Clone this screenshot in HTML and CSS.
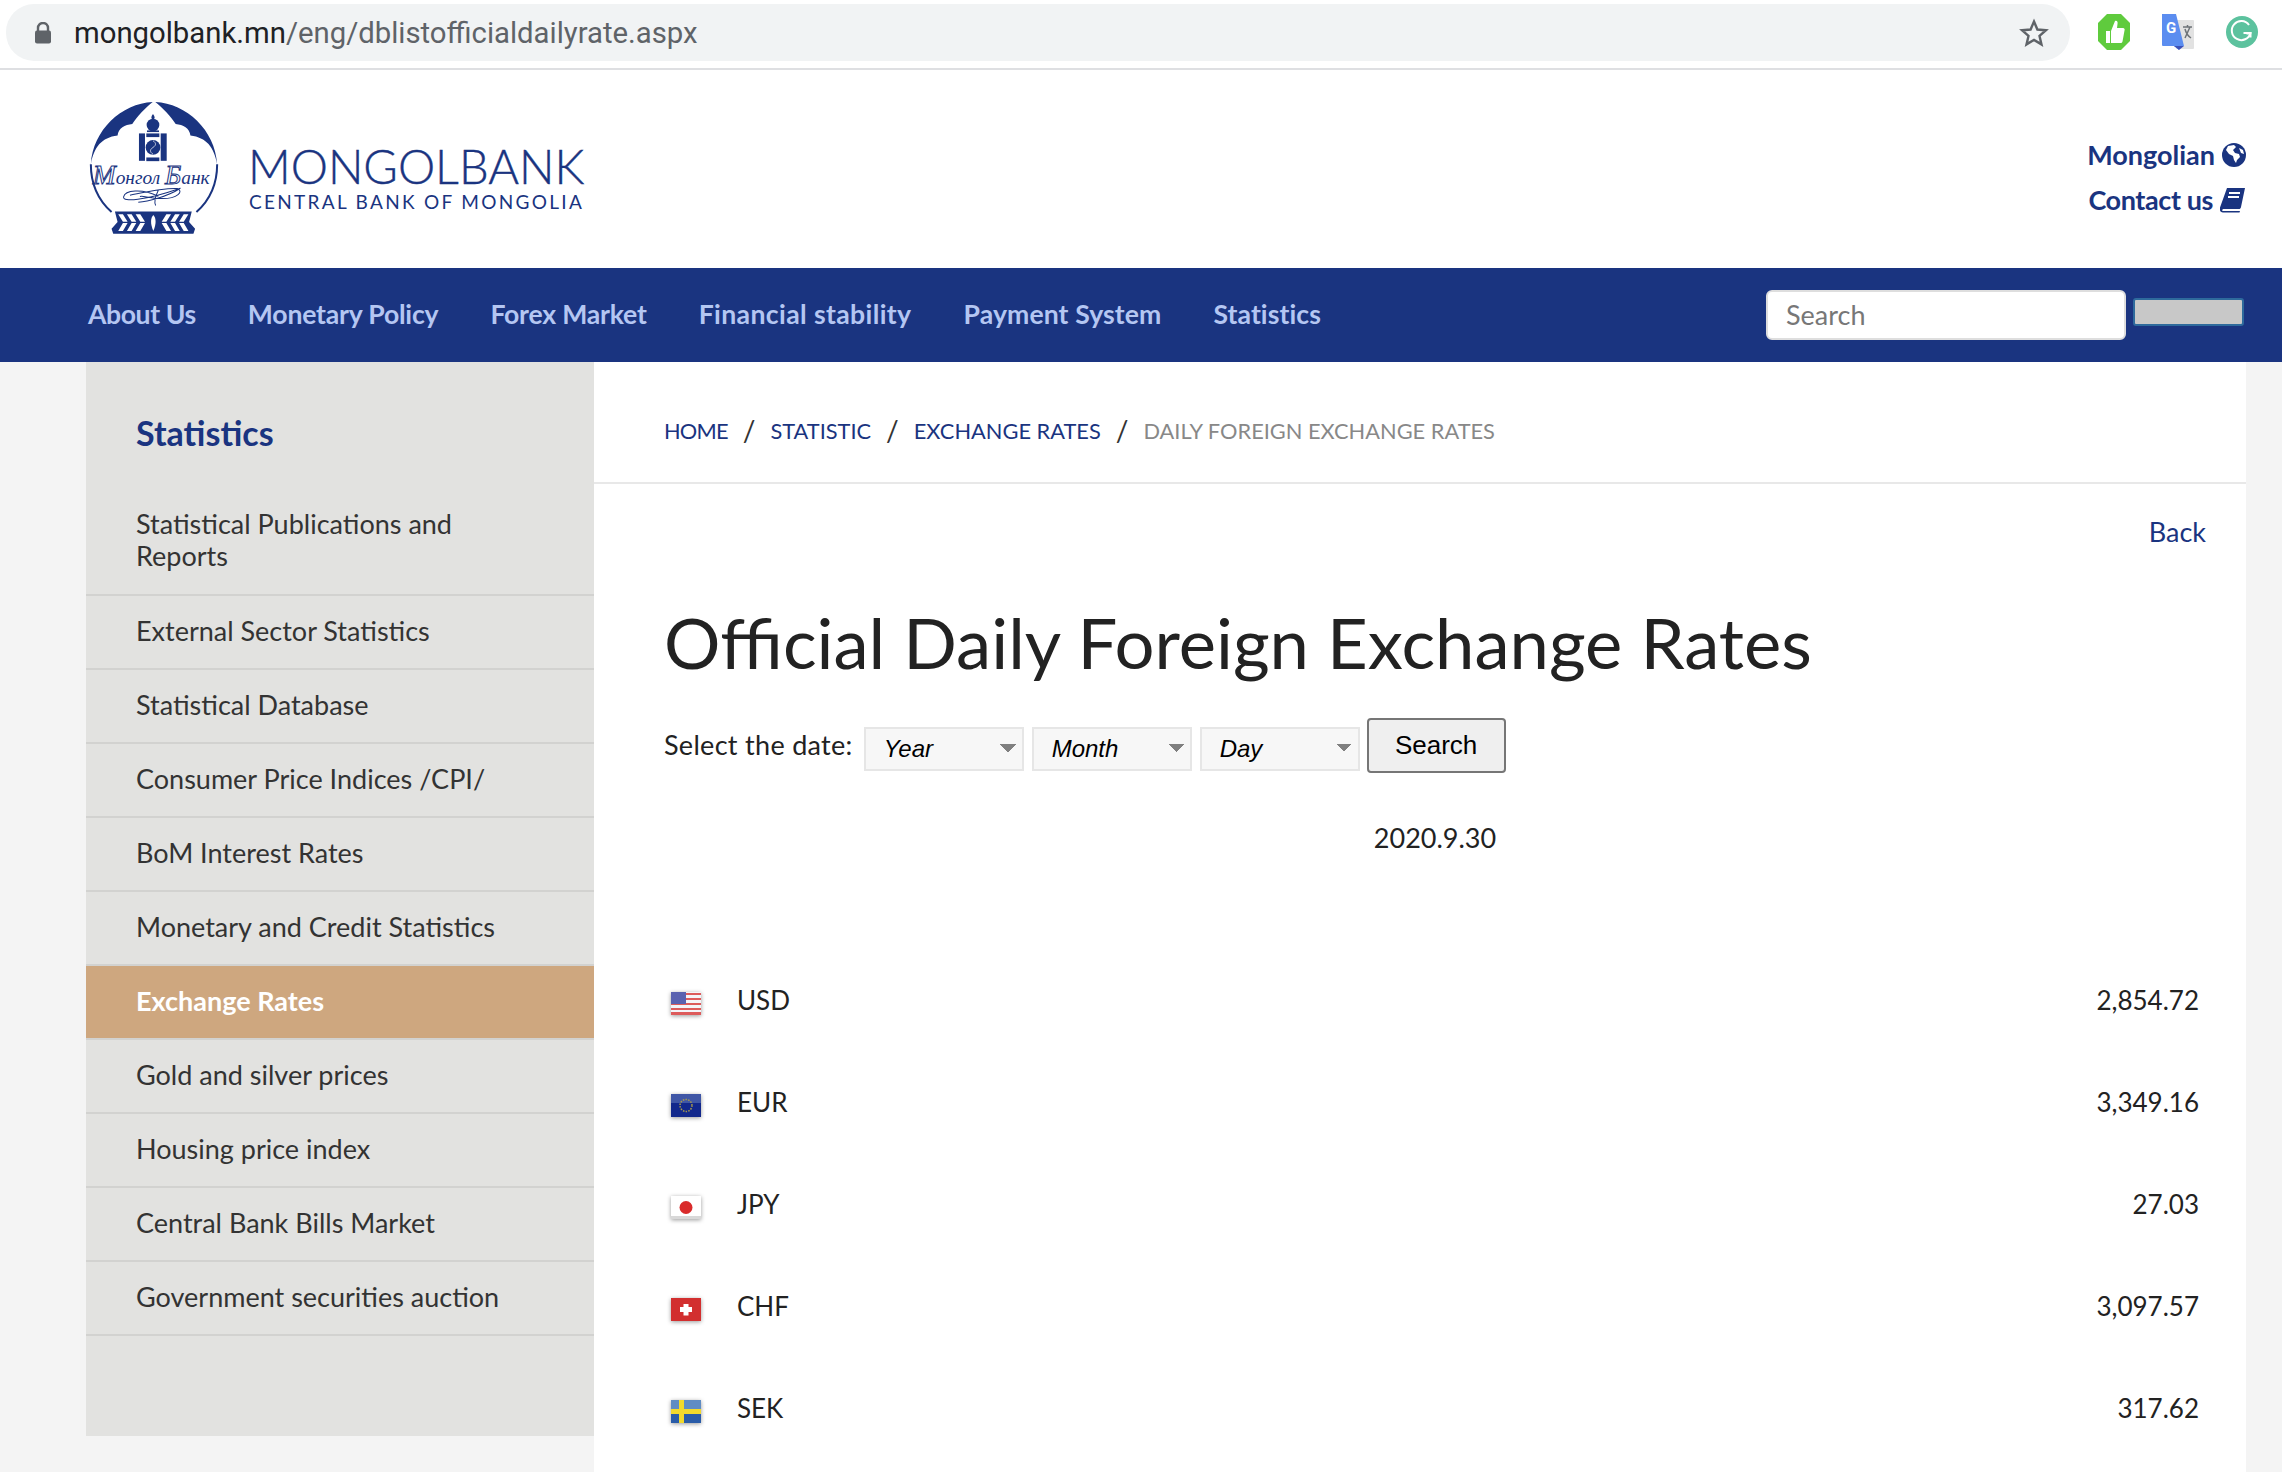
FILE: index.html
```html
<!DOCTYPE html>
<html lang="en">
<head>
    <meta charset="UTF-8">
    <meta name="viewport" content="width=device-width, initial-scale=1.0">
    <title>Official Daily Foreign Exchange Rates</title>
    <link rel="stylesheet" href="styles.css">
</head>
<body>

    <!-- browser bar -->
    <div class="browser-bar">
        <div class="address">
            <svg class="lock" width="18" height="22" viewBox="0 0 18 22"><path d="M4 9V6a5 5 0 0 1 10 0v3" fill="none" stroke="#5f6368" stroke-width="2.4"/><rect x="1" y="8.500" width="16" height="13" rx="2" fill="#5f6368"/></svg>
            <span class="url"><b>mongolbank.mn</b>/eng/dblistofficialdailyrate.aspx</span>
            <svg class="star" width="30" height="30" viewBox="0 0 30 30"><path d="M15 3.500l3.400 8 8.600.7-6.500 5.700 2 8.500-7.500-4.500-7.500 4.500 2-8.500L3 12.200l8.600-.7z" fill="none" stroke="#5f6368" stroke-width="2.400" stroke-linejoin="miter"/></svg>
        </div>
        <div class="extensions">
            <svg width="32" height="36" viewBox="0 0 32 36"><path d="M9 0h14l9 9v18l-9 9H9l-9-9V9z" fill="#5fcb3d"/><path d="M8 17h4v12H8zM13 17l4-10c2-1 3 1 2.500 3l-.5 4h6c1.500 0 2 1.500 1.500 2.500l-2 11c-.3 1-1 1.500-2 1.500H13z" fill="#fff"/></svg>
            <svg width="32" height="36" viewBox="0 0 32 36"><rect x="14" y="6" width="18" height="29" rx="1" fill="#e2e2e2"/><path d="M21 13h9M25.500 11v2M23 24l5-11M23 15c1 4 3 7 6 9" fill="none" stroke="#6d7378" stroke-width="1.500"/><path d="M0 0h14l8 32H17v4l-5-4H1a1 1 0 0 1-1-1z" fill="#5b8df0"/><path d="M12 32h10l-5 4-1-1z" fill="#3c50b8"/><text class="tr-g" x="4" y="19">G</text></svg>
            <svg width="32" height="36" viewBox="0 0 32 36"><circle cx="16" cy="18" r="16" fill="#5cc29e"/><path d="M23 11a9.500 9.500 0 1 0 1.500 8h-7" fill="none" stroke="#fff" stroke-width="2"/><path d="M20.500 19.500h4v4" fill="none" stroke="#fff" stroke-width="2"/></svg>
        </div>
    </div>

    <header class="site-header">
        <div class="logo">
            <svg class="emblem" width="134" height="137" viewBox="90 60 400 410">
                <path d="M160 395C115 355 98 305 98 252M414 395C459 355 476 305 476 252" fill="none" stroke="#1a3480" stroke-width="6"/>
                <path d="M283 66C190 70 104 150 98 252 108 200 130 172 178 166 180 145 200 134 222 132 236 110 262 82 283 66Z" fill="#1a3480"/>
                <path d="M291 66C384 70 470 150 476 252 466 200 444 172 396 166 394 145 374 134 352 132 338 110 312 82 291 66Z" fill="#1a3480"/>
                <g fill="#1a3480">
                    <path d="M284 102c6 8 6 12 3 15h-6c-3-3-3-7 3-15z"/>
                    <circle cx="284" cy="135" r="19"/>
                    <rect x="266" y="151" width="36" height="5"/>
                    <rect x="242" y="160" width="18" height="82"/>
                    <rect x="307" y="160" width="18" height="82"/>
                    <rect x="264" y="160" width="39" height="11"/>
                    <rect x="264" y="232" width="39" height="11"/>
                    <circle cx="284" cy="202" r="22"/>
                </g>
                <path d="M284 182c10 6 10 14 0 20s-10 14 0 20" fill="none" stroke="#fff" stroke-width="2"/>
                <text class="emblem-script" x="104" y="312"><tspan class="script-cap">М</tspan>онгол <tspan class="script-cap">Б</tspan>анк</text>
                <path d="M300 348c-50-24-100-18-104 2-3 16 60 12 170-26-40 26-100 40-126 42M215 345c50-10 100-22 142-20 20 8 0 30-44 30-40 0-60-10-68-6M300 330c-10 20-14 34-8 46" fill="none" stroke="#1a3480" stroke-width="3"/>
                <path d="M170 394H400L392 425 410 445 405 460H165L160 445 178 425Z" fill="#1a3480"/>
                <g id="leaves" fill="#fff">
                    <path d="M180 402h14l14 22h-14zM194 428h14l-14 24h-14zM206 402h14l14 22h-14zM220 428h14l-14 24h-14zM232 402h14l14 22h-14zM246 428h14l-14 24h-14z"/>
                </g>
                <use href="#leaves" transform="matrix(-1 0 0 1 570 0)"/>
                <path d="M285 404c8 8 10 24 0 48-10-24-8-40 0-48z" fill="#fff"/>
            </svg>
            <div class="logo-text">
                <div class="logo-name">MONGOLBANK</div>
                <div class="logo-sub">CENTRAL BANK OF MONGOLIA</div>
            </div>
        </div>
        <div class="header-links">
            <a>Mongolian
                <svg width="24" height="26" viewBox="0 0 24 26"><circle cx="12" cy="13" r="12" fill="#1a3480"/><path d="M6 4l6-1 2 2-3 3 2 3 4 1 1 3-3 3-1 3-2-3-1-4-4-2-3-4zM17 6l4 2 1 4-3-1z" fill="#fff"/></svg>
            </a>
            <a class="contact">Contact us
                <svg width="26" height="26" viewBox="0 0 26 26"><path d="M7 1h18l-4 19c-.3 1.500-1 2-2 2H4c-2 0-2.500 2-1 2h17l-.5 1.500H3c-3 0-3.500-3-3-5z" fill="#1a3480"/><path d="M9 6h11M8 10h11" stroke="#fff" stroke-width="2"/></svg>
            </a>
        </div>
    </header>

    <nav class="main-nav">
        <a class="tight">About Us</a>
        <a>Monetary Policy</a>
        <a>Forex Market</a>
        <a class="wide">Financial stability</a>
        <a class="loose">Payment System</a>
        <a class="loose">Statistics</a>
        <div class="nav-search">
            <input type="text" placeholder="Search">
            <button></button>
        </div>
    </nav>

    <div class="page">
        <aside class="sidebar">
            <h3>Statistics</h3>
            <ul>
                <li class="two-line">Statistical Publications and Reports</li>
                <li>External Sector Statistics</li>
                <li>Statistical Database</li>
                <li>Consumer Price Indices /CPI/</li>
                <li>BoM Interest Rates</li>
                <li>Monetary and Credit Statistics</li>
                <li class="active">Exchange Rates</li>
                <li>Gold and silver prices</li>
                <li>Housing price index</li>
                <li>Central Bank Bills Market</li>
                <li>Government securities auction</li>
            </ul>
        </aside>

        <main class="content">
            <div class="breadcrumb">
                <a class="home">HOME</a><span>/</span><a>STATISTIC</a><span>/</span><a>EXCHANGE RATES</a><span>/</span><em>DAILY FOREIGN EXCHANGE RATES</em>
            </div>
            <div class="inner">
                <div class="back"><a>Back</a></div>
                <h1>Official Daily Foreign Exchange Rates</h1>
                <div class="date-form">
                    <label>Select the date:</label>
                    <select><option>Year</option></select>
                    <select><option>Month</option></select>
                    <select><option>Day</option></select>
                    <button>Search</button>
                </div>
                <div class="rate-date">2020.9.30</div>

                <div class="rates">
                    <div class="rate">
                        <svg class="flag" width="30" height="23" viewBox="0 0 30 23">
                            <rect width="30" height="23" fill="#f4f4f8"/>
                            <path d="M0 1h30v2H0zM0 6h30v2H0zM0 11h30v2H0zM0 16h30v2H0zM0 20h30v3H0z" fill="#dd5b5b"/>
                            <rect width="15" height="12" fill="#5a62b0"/>
                        </svg>
                        <span class="code">USD</span><span class="value">2,854.72</span>
                    </div>
                    <div class="rate">
                        <svg class="flag" width="30" height="23" viewBox="0 0 30 23">
                            <rect width="30" height="23" fill="#12288c"/>
                            <rect width="30" height="9" fill="#3f56a6"/>
                            <circle cx="15" cy="11.500" r="6" fill="none" stroke="#a89a4c" stroke-width="1.500" stroke-dasharray="1.500 1.200"/>
                        </svg>
                        <span class="code">EUR</span><span class="value">3,349.16</span>
                    </div>
                    <div class="rate">
                        <svg class="flag" width="30" height="23" viewBox="0 0 30 23">
                            <rect width="30" height="23" fill="#fff"/>
                            <rect y="20" width="30" height="3" fill="#d8d8d8"/>
                            <circle cx="15" cy="11.500" r="6.500" fill="#d92b2b"/>
                        </svg>
                        <span class="code">JPY</span><span class="value">27.03</span>
                    </div>
                    <div class="rate">
                        <svg class="flag" width="30" height="23" viewBox="0 0 30 23">
                            <rect width="30" height="23" fill="#d22f2f"/>
                            <path d="M12.500 6h5v3h3.500v5h-3.500v3.500h-5V14H9V9h3.500z" fill="#fff"/>
                        </svg>
                        <span class="code">CHF</span><span class="value">3,097.57</span>
                    </div>
                    <div class="rate">
                        <svg class="flag" width="30" height="23" viewBox="0 0 30 23">
                            <rect width="30" height="23" fill="#2a5ca8"/>
                            <rect width="30" height="9" fill="#5f8cc4"/>
                            <rect x="8" width="5" height="23" fill="#f2d92c"/>
                            <rect y="9" width="30" height="5" fill="#f2d92c"/>
                        </svg>
                        <span class="code">SEK</span><span class="value">317.62</span>
                    </div>
                </div>
            </div>
        </main>
    </div>

</body>
</html>
```

FILE: styles.css
```css
html, body {
    margin: 0;
    height: 100%;
    overflow: hidden;
}

body {
    background: #fff;
    color: #222;
    font-family: "Lato", "Liberation Sans", sans-serif;
    font-size: 27px;
}

a {
    text-decoration: none;
}

/* browser bar */
.browser-bar {
    height: 70px;
    box-sizing: border-box;
    padding: 4px 0 0 6px;
    display: flex;
    align-items: flex-start;
    border-bottom: 2px solid #dedfe2;
}

.address {
    width: 2064px;
    height: 57px;
    flex-shrink: 0;
    background: #f1f3f4;
    border-radius: 28px;
    display: flex;
    align-items: center;
    padding: 0 21px 0 28px;
    box-sizing: border-box;
}

.lock {
    margin-right: 22px;
}

.url {
    flex: 1;
    font-family: "Roboto", "Liberation Sans", sans-serif;
    font-size: 29.300px;
    color: #5f6368;
}

.url b {
    font-weight: 400;
    color: #202124;
}

.extensions {
    display: flex;
    gap: 32px;
    margin: 10px 0 0 28px;
}

.tr-g {
    font-family: "Roboto", sans-serif;
    font-weight: 700;
    font-size: 15px;
    fill: #fff;
}

/* site header */
.site-header {
    height: 198px;
    padding: 30px 36px 0 88px;
    box-sizing: border-box;
    display: flex;
    justify-content: space-between;
}

.logo {
    display: flex;
    align-items: flex-start;
}

.emblem-script {
    font-family: "Liberation Serif", serif;
    font-style: italic;
    font-size: 58px;
    fill: #1a3480;
}

.script-cap {
    font-size: 82px;
    fill: #fff;
    stroke: #1a3480;
    stroke-width: 3px;
}

.logo-text {
    margin: 41px 0 0 26px;
    color: #1a3480;
    font-family: "Lato", sans-serif;
}

.logo-name {
    font-size: 47px;
    font-weight: 300;
    -webkit-text-stroke: 0.400px #1a3480;
    line-height: 50px;
}

.logo-sub {
    font-size: 19px;
    letter-spacing: 2.300px;
    line-height: 22px;
    margin-left: 1px;
}

.header-links {
    padding-top: 39px;
    display: flex;
    flex-direction: column;
    align-items: flex-end;
    gap: 13px;
}

.header-links a {
    color: #1a3480;
    font-weight: 700;
    line-height: 32px;
    display: flex;
    align-items: center;
    gap: 7px;
}

.header-links .contact {
    letter-spacing: -0.400px;
}

/* nav */
.main-nav {
    height: 94px;
    background: #1a3480;
    display: flex;
    align-items: center;
    padding: 0 38px 0 88px;
    gap: 52px;
    font-size: 26.600px;
}

.main-nav a {
    color: #b4c6f2;
    font-weight: 700;
    margin-top: -2px;
    letter-spacing: -0.200px;
}

.main-nav a.tight {
    letter-spacing: -0.400px;
}

.main-nav a.wide {
    letter-spacing: 0.380px;
}

.main-nav a.loose {
    letter-spacing: 0.100px;
}

.nav-search {
    margin-left: auto;
    display: flex;
    align-items: flex-start;
    gap: 7px;
}

.nav-search input {
    width: 360px;
    height: 50px;
    box-sizing: border-box;
    border: 2px solid #dedede;
    border-radius: 6px;
    padding: 0 18px 2px;
    font: inherit;
    font-size: 27px;
    font-weight: 400;
}

.nav-search input::placeholder {
    color: #777;
}

.nav-search button {
    width: 111px;
    height: 28px;
    margin-top: 8px;
    background: #c8c8c8;
    border: 2px solid #2e6a9c;
    border-radius: 3px;
}

/* page */
.page {
    height: 1110px;
    background: #f4f4f4;
    padding: 0 36px 0 86px;
    display: flex;
}

.sidebar {
    width: 508px;
    height: 1074px;
    background: #e2e2e0;
    flex-shrink: 0;
}

.sidebar h3 {
    margin: 0;
    height: 118px;
    padding: 51px 0 0 50px;
    box-sizing: border-box;
    line-height: 40px;
    font-size: 34px;
    color: #1a3480;
    font-weight: 700;
}

.sidebar ul {
    list-style: none;
    margin: 0;
    padding: 0;
}

.sidebar li {
    height: 74px;
    box-sizing: border-box;
    padding: 0 50px 3px;
    display: flex;
    align-items: center;
    border-bottom: 2px solid #d2d2d0;
    color: #333;
    line-height: 32px;
}

.sidebar li.two-line {
    height: 116px;
    padding-top: 8px;
    padding-bottom: 2px;
}

.sidebar li.active {
    background: #cea77f;
    color: #fff;
    font-weight: 700;
}

.content {
    flex: 1;
    background: #fff;
}

.breadcrumb {
    height: 122px;
    box-sizing: border-box;
    padding: 16px 0 0 70px;
    display: flex;
    align-items: center;
    gap: 15px;
    border-bottom: 2px solid #e8e8e8;
    font-size: 21.800px;
}

.breadcrumb a {
    color: #1a3480;
}

.breadcrumb .home {
    letter-spacing: -0.800px;
}

.breadcrumb span {
    font-size: 28px;
    color: #333;
}

.breadcrumb em {
    font-style: normal;
    color: #888;
}

.inner {
    padding: 0 40px 0 70px;
}

.back {
    text-align: right;
    padding-top: 32px;
    line-height: 32px;
}

.back a {
    color: #1a3480;
}

h1 {
    margin: 51px 0 0;
    font-size: 70.600px;
    font-weight: 400;
    line-height: 86px;
    color: #222;
}

.date-form {
    display: flex;
    align-items: center;
    gap: 8px;
    margin-top: 32px;
    height: 56px;
}

.date-form label {
    margin-right: 3px;
    margin-top: -1px;
    letter-spacing: 0.300px;
}

.date-form select {
    width: 160px;
    height: 44px;
    margin-top: 7px;
    box-sizing: border-box;
    appearance: none;
    border: 2px solid #e6e6e6;
    border-radius: 0;
    padding: 2px 18px;
    font-family: "Liberation Sans", sans-serif;
    font-style: italic;
    font-size: 24px;
    color: #000;
    background-color: #f7f7f7;
    background-image: linear-gradient(45deg, transparent 50%, #808080 50%), linear-gradient(-45deg, transparent 50%, #808080 50%);
    background-size: 8px 8px;
    background-position: 134px 15px, 142px 15px;
    background-repeat: no-repeat;
}

.date-form button {
    width: 139px;
    height: 55px;
    margin-left: -1px;
    background: #efefef;
    border: 2px solid #767676;
    border-radius: 4px;
    font-family: "Liberation Sans", sans-serif;
    font-size: 26px;
    color: #000;
}

.rate-date {
    text-align: center;
    margin-top: 49px;
    line-height: 32px;
}

.rates {
    margin-top: 95px;
    font-size: 26px;
}

.rate {
    height: 102px;
    display: flex;
    align-items: center;
}

.flag {
    margin: 7px 36px 0 7px;
    filter: drop-shadow(0 1px 2px rgba(0, 0, 0, 0.4));
}

.value {
    margin-left: auto;
    margin-right: 7px;
}
```
